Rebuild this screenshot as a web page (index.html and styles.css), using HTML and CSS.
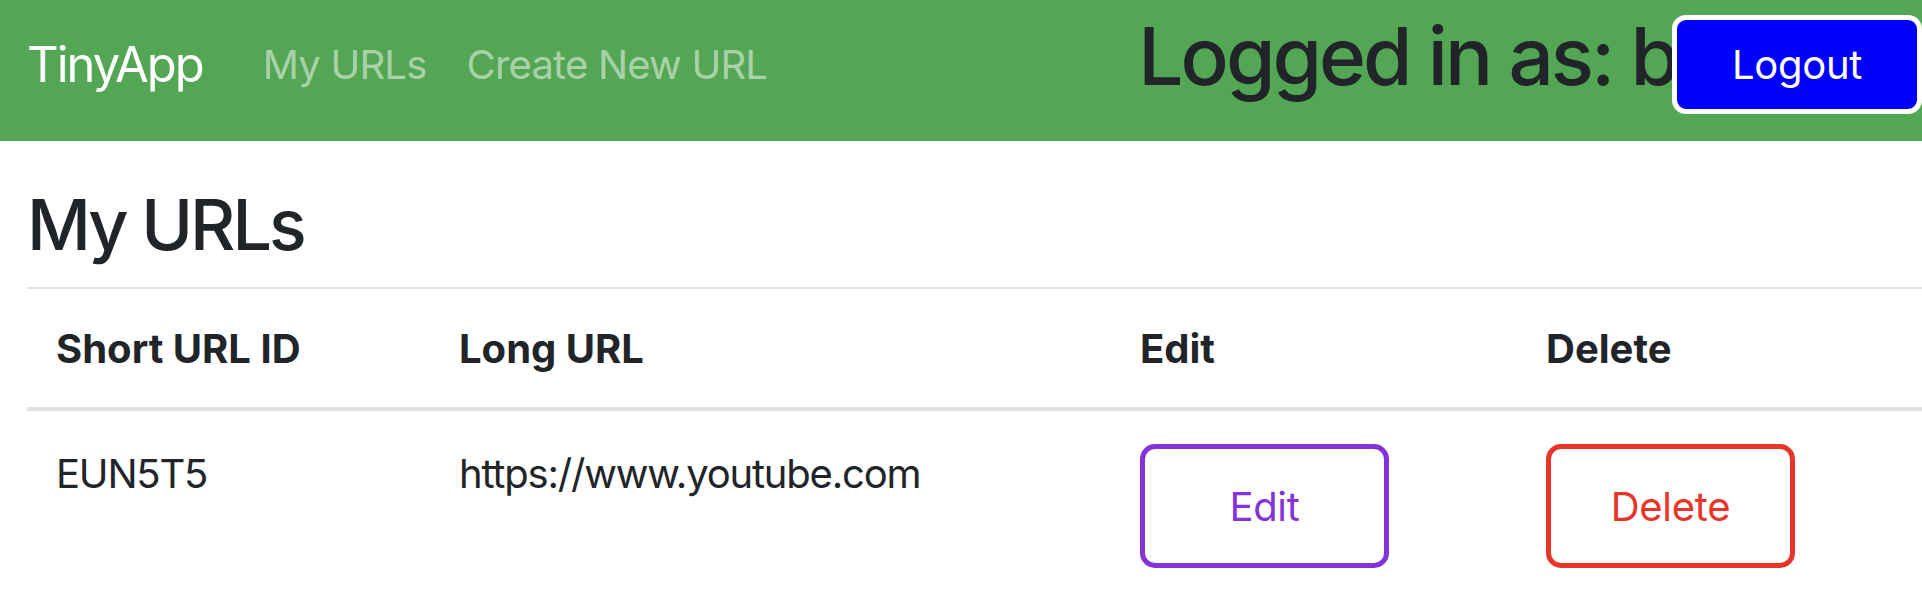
FILE: index.html
```html
<!DOCTYPE html>
<html lang="en">
<head>
<meta charset="utf-8">
<title>TinyApp</title>
<link rel="stylesheet" href="styles.css">
</head>
<body>
<nav class="navbar">
  <a class="brand" href="#">TinyApp</a>
  <div class="nav-links">
    <a class="nav-link" href="#">My URLs</a>
    <a class="nav-link" href="#">Create New URL</a>
  </div>
  <div class="user-area">
    <h1 class="logged">Logged in as: b</h1>
    <button class="logout">Logout</button>
  </div>
</nav>
<main class="main">
  <h2 class="page-title">My URLs</h2>
  <table class="url-table">
    <colgroup>
      <col class="c-short">
      <col class="c-long">
      <col class="c-edit">
      <col class="c-delete">
    </colgroup>
    <thead>
      <tr>
        <th>Short URL ID</th>
        <th>Long URL</th>
        <th>Edit</th>
        <th>Delete</th>
      </tr>
    </thead>
    <tbody>
      <tr>
        <td>EUN5T5</td>
        <td>https://www.youtube.com</td>
        <td><button class="btn btn-edit">Edit</button></td>
        <td><button class="btn btn-delete">Delete</button></td>
      </tr>
    </tbody>
  </table>
</main>
</body>
</html>
```

FILE: styles.css
```css
* { box-sizing: border-box; }

html, body {
  margin: 0;
  padding: 0;
  background: #ffffff;
  overflow: hidden;
}

body {
  font-family: Inter, "Noto Sans", sans-serif;
  font-size: 40px;
  line-height: 1.5;
  color: #212529;
}

.navbar {
  display: flex;
  align-items: center;
  height: 141px;
  padding: 0 0 12px 27px;
  background: #53a653;
}

.brand {
  font-size: 49px;
  line-height: 1.5;
  color: #ffffff;
  text-decoration: none;
  letter-spacing: -2px;
  margin-right: 40px;
}

.nav-links {
  display: flex;
}

.nav-link {
  padding: 0 20px;
  color: rgba(255, 255, 255, 0.5);
  text-decoration: none;
  letter-spacing: -0.8px;
}

.user-area {
  margin-left: auto;
  display: flex;
  align-items: center;
}

.logged {
  margin: 0 -5px 18px 0;
  font-size: 80px;
  font-weight: 500;
  line-height: 1.2;
  letter-spacing: -3px;
  color: #212529;
}

.logout {
  position: relative;
  width: 250px;
  height: 99px;
  border: 5px solid #ffffff;
  border-radius: 14px;
  background: #0000ff;
  color: #ffffff;
  font-family: inherit;
  font-size: 40px;
  letter-spacing: -0.3px;
  padding: 0;
}

.main {
  padding: 0 0 0 27px;
}

.page-title {
  margin: 42px 0 20px;
  font-size: 70px;
  font-weight: 500;
  line-height: 1.2;
  letter-spacing: -3px;
}

.url-table {
  width: 100%;
  table-layout: fixed;
  border-collapse: separate;
  border-spacing: 0;
}

.c-short { width: 403px; }
.c-long { width: 681px; }
.c-edit { width: 406px; }
.c-delete { width: 405px; }

.url-table th {
  text-align: left;
  font-weight: 700;
  padding: 30px 29px 28px;
  border-top: 2px solid #dee2e6;
  border-bottom: 4px solid #dee2e6;
  letter-spacing: 0;
  vertical-align: bottom;
}

.url-table td {
  padding: 33px 29px 30px;
  vertical-align: top;
  letter-spacing: -1.2px;
}

.btn {
  display: flex;
  align-items: center;
  justify-content: center;
  width: 249px;
  height: 124px;
  padding: 0;
  background: #ffffff;
  border: 5px solid;
  border-radius: 15px;
  font-family: inherit;
  font-size: 40px;
  letter-spacing: -0.3px;
}

.btn-edit {
  border-color: #8333d7;
  color: #8333d7;
}

.btn-delete {
  border-color: #e8352a;
  color: #e8352a;
}
```
